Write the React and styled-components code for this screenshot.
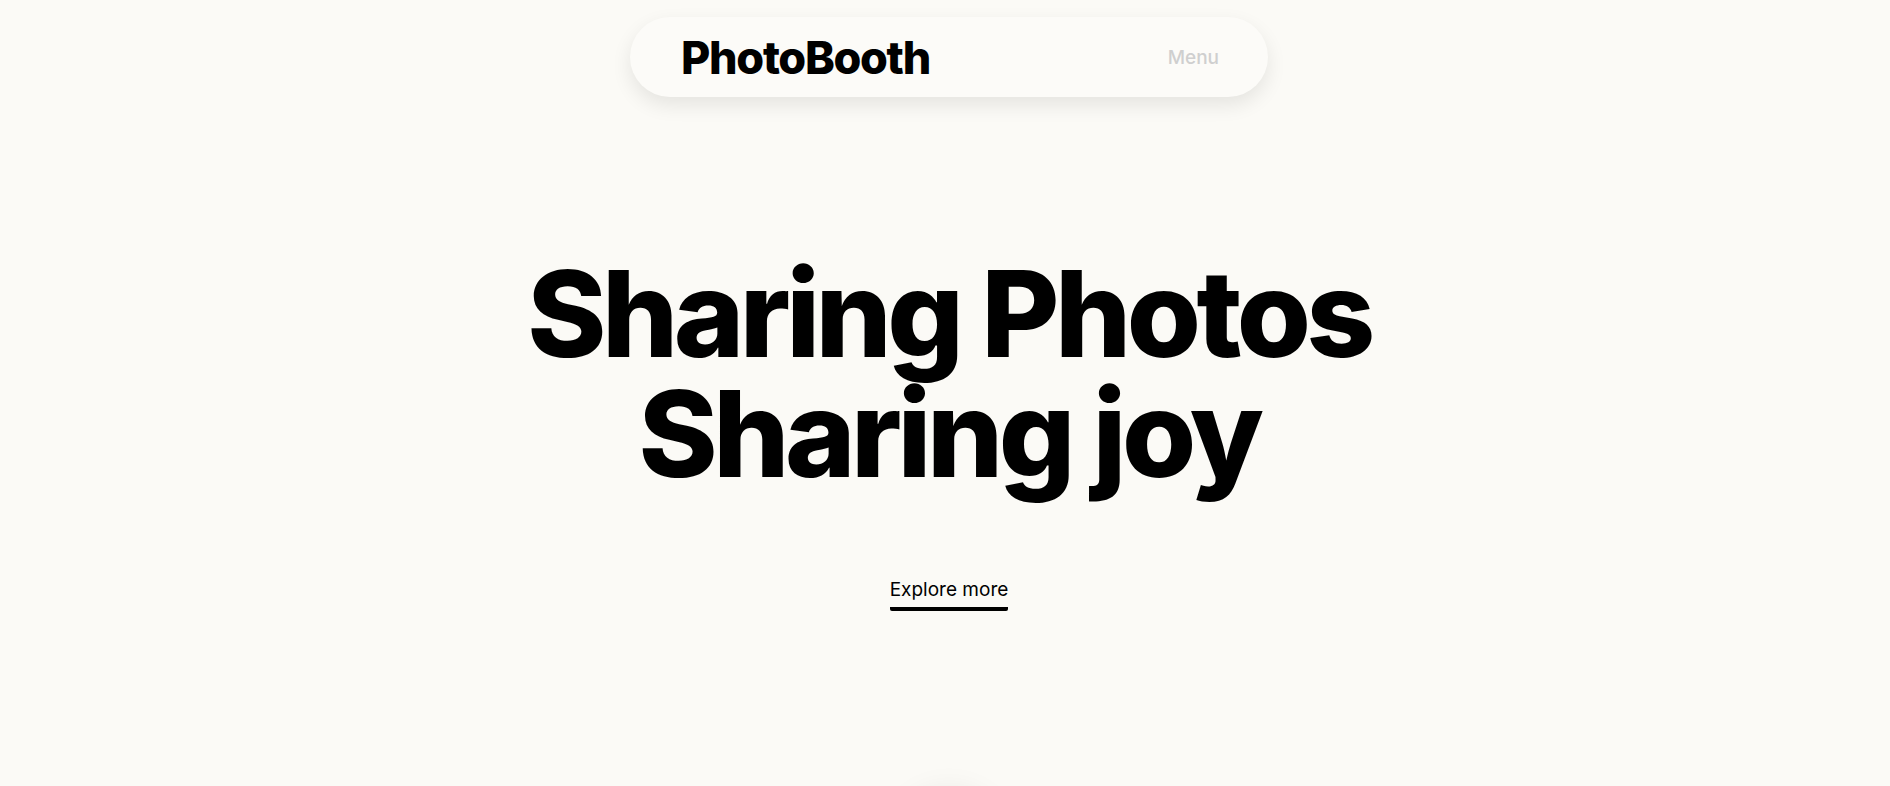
import styled, { createGlobalStyle } from "styled-components";

const GlobalStyle = createGlobalStyle`
  html, body {
    margin: 0;
    padding: 0;
    background: #fbfaf6;
    font-family: Inter, "Liberation Sans", sans-serif;
    color: #000;
  }
  * { box-sizing: border-box; }
`;

const Page = styled.div`
  min-height: 786px;
  display: flex;
  flex-direction: column;
  align-items: center;
  padding-left: 8px;
`;

const Header = styled.header`
  margin-top: 17px;
  width: 638px;
  height: 80px;
  border-radius: 40px;
  background: #fcfbf8;
  box-shadow: 0 8px 20px rgba(0, 0, 0, 0.09);
  display: flex;
  align-items: center;
  justify-content: space-between;
  padding: 0 49px 0 51px;
`;

const Logo = styled.div`
  font-size: 45px;
  font-weight: 800;
  letter-spacing: -1.3px;
`;

const Menu = styled.button`
  border: none;
  background: none;
  color: #cfcfcf;
  font-family: inherit;
  font-size: 19px;
  font-weight: 500;
  cursor: pointer;
  padding: 0;
`;

const Hero = styled.main`
  display: flex;
  flex-direction: column;
  align-items: center;
  margin-top: 157px;
`;

const Title = styled.h1`
  margin: 0;
  font-size: 120px;
  font-weight: 800;
  line-height: 120px;
  letter-spacing: -4.5px;
  text-align: center;
`;

const Explore = styled.a`
  margin-top: 84px;
  font-size: 19px;
  color: #000;
  text-decoration: none;
  padding-bottom: 6px;
  border-bottom: 4px solid #000;
  border-radius: 2px;
  cursor: pointer;
`;

const Peek = styled.div`
  margin-top: 180px;
  width: 110px;
  height: 110px;
  border-radius: 50%;
  background: #fbfaf6;
  box-shadow: 0 0 30px rgba(0, 0, 0, 0.08);
`;

export default function App() {
  return (
    <>
      <GlobalStyle />
      <Page>
        <Header>
          <Logo>PhotoBooth</Logo>
          <Menu>Menu</Menu>
        </Header>
        <Hero>
          <Title>
            Sharing Photos
            <br />
            Sharing joy
          </Title>
          <Explore>Explore more</Explore>
        </Hero>
        <Peek />
      </Page>
    </>
  );
}
